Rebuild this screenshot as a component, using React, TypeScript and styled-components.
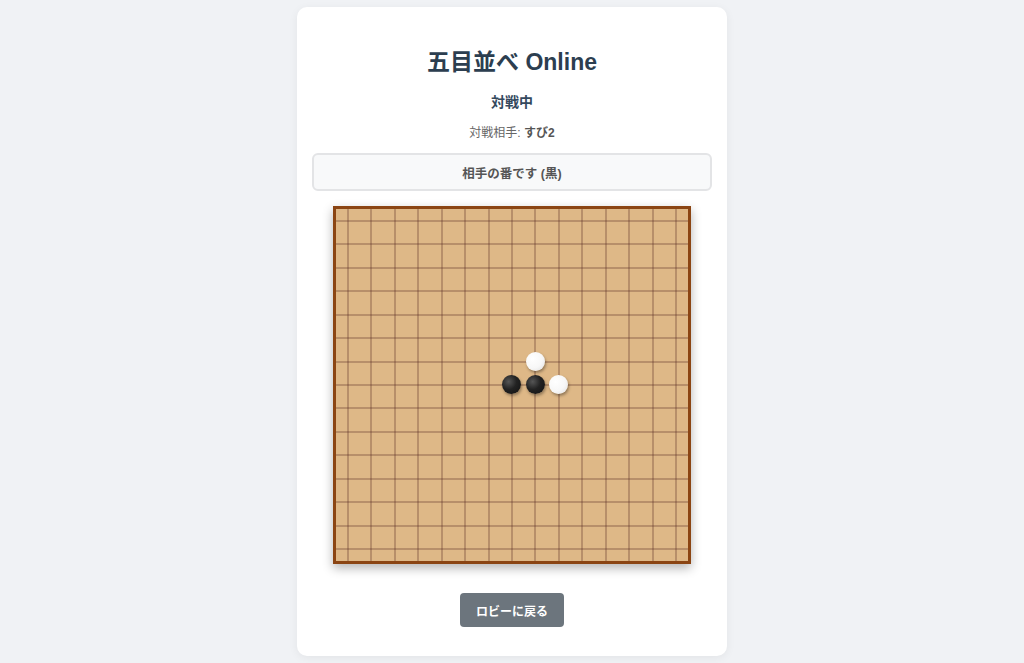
import React from 'react';
import styled, { createGlobalStyle } from 'styled-components';

// --- Dados do tabuleiro ---
const SIZE = 15;

type Stone = 'black' | 'white' | null;

const stones: Record<string, Stone> = {
  '7-7': 'black',
  '7-8': 'black',
  '6-8': 'white',
  '7-9': 'white',
};

const GlobalStyle = createGlobalStyle`
  html, body {
    margin: 0;
    padding: 0;
    background: #f0f2f5;
    font-family: "Liberation Sans", "Noto Sans CJK JP", sans-serif;
  }
`;

// --- Styled Components ---

const Page = styled.div`
  padding: 7px 0;
  display: flex;
  justify-content: center;
`;

const Card = styled.main`
  width: 400px;
  padding: 15px;
  background: #ffffff;
  border-radius: 10px;
  box-shadow: 0 2px 10px rgba(0, 0, 0, 0.06);
  display: flex;
  flex-direction: column;
  align-items: center;
`;

const Title = styled.h1`
  margin: 25px 0 0;
  font-size: 23px;
  line-height: 30px;
  font-weight: 700;
  color: #2c3e50;
`;

const Subtitle = styled.h2`
  margin: 15px 0 0;
  font-size: 14px;
  line-height: 20px;
  font-weight: 700;
  color: #34495e;
`;

const Opponent = styled.p`
  margin: 12px 0 0;
  font-size: 12px;
  line-height: 18px;
  color: #666;

  strong {
    color: #555;
    font-weight: 700;
  }
`;

const Status = styled.div`
  box-sizing: border-box;
  width: 100%;
  height: 38px;
  margin-top: 11px;
  display: flex;
  align-items: center;
  justify-content: center;
  background: #f8f9fa;
  border: 2px solid #e3e4e6;
  border-radius: 6px;
  font-size: 12.5px;
  font-weight: 700;
  color: #555;
`;

const Board = styled.div`
  margin-top: 15px;
  width: 352px;
  height: 352px;
  display: grid;
  grid-template-columns: repeat(${SIZE}, 1fr);
  grid-template-rows: repeat(${SIZE}, 1fr);
  background: #deb887;
  border: 3px solid #8b4513;
  box-shadow: 0 4px 10px rgba(0, 0, 0, 0.3);
`;

const Cell = styled.div`
  position: relative;
  display: flex;
  align-items: center;
  justify-content: center;

  &::before,
  &::after {
    content: '';
    position: absolute;
    background: rgba(95, 50, 40, 0.6);
  }

  &::before {
    left: 0;
    right: 0;
    top: 50%;
    height: 1px;
    transform: translateY(-0.5px);
  }

  &::after {
    top: 0;
    bottom: 0;
    left: 50%;
    width: 1px;
    transform: translateX(-0.5px);
  }
`;

const Piece = styled.div<{ $color: 'black' | 'white' }>`
  position: relative;
  z-index: 1;
  width: 19px;
  height: 19px;
  border-radius: 50%;
  box-shadow: 1px 2px 3px rgba(0, 0, 0, 0.35);
  background: ${({ $color }) =>
    $color === 'black'
      ? 'radial-gradient(circle at 35% 35%, #555 0%, #222 45%, #111 100%)'
      : 'radial-gradient(circle at 35% 35%, #ffffff 0%, #f7f7f7 55%, #dcdcdc 100%)'};
`;

const BackButton = styled.button`
  margin: 29px 0 14px;
  height: 34px;
  padding: 0 16px;
  border: none;
  border-radius: 4px;
  background: #6c757d;
  color: #ffffff;
  font-family: inherit;
  font-size: 12px;
  font-weight: 700;
  cursor: pointer;
`;

// --- O Componente ---

export default function App() {
  const cells = [];
  for (let r = 0; r < SIZE; r++) {
    for (let c = 0; c < SIZE; c++) {
      const stone = stones[`${r}-${c}`];
      cells.push(
        <Cell key={`${r}-${c}`}>
          {stone && <Piece $color={stone} />}
        </Cell>
      );
    }
  }

  return (
    <>
      <GlobalStyle />
      <Page>
        <Card>
          <Title>五目並べ Online</Title>
          <Subtitle>対戦中</Subtitle>
          <Opponent>
            対戦相手: <strong>すび2</strong>
          </Opponent>
          <Status>相手の番です (黒)</Status>
          <Board>{cells}</Board>
          <BackButton>ロビーに戻る</BackButton>
        </Card>
      </Page>
    </>
  );
}
